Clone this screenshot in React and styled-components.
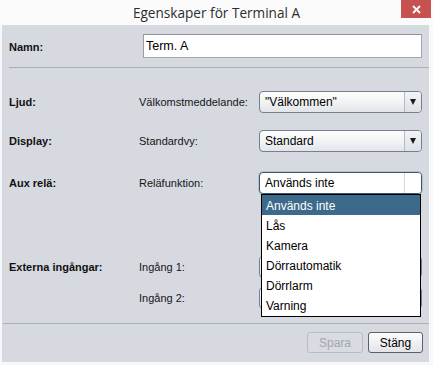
import styled, { createGlobalStyle } from 'styled-components'

const GlobalStyle = createGlobalStyle`
  html, body {
    margin: 0;
    padding: 0;
    background: #f7f8fa;
  }
  body {
    font-family: 'Liberation Sans', Arial, sans-serif;
  }
`

const Window = styled.div`
  width: 433px;
  height: 365px;
  display: flex;
  flex-direction: column;
  background: #f7f8fa;
`

const TitleBar = styled.div`
  position: relative;
  flex: none;
  height: 25px;
  display: flex;
  align-items: center;
  justify-content: center;
  background: #fbfbfc;
  font-family: 'Open Sans', 'Liberation Sans', sans-serif;
  font-size: 13.6px;
  color: #2d2d2d;
`

const Title = styled.span`
  padding-bottom: 1px;
`

const CloseButton = styled.div`
  position: absolute;
  top: 0;
  right: 2px;
  width: 30px;
  height: 18px;
  background: #c75050;
  display: flex;
  align-items: center;
  justify-content: center;
`

const Body = styled.div`
  flex: 1;
  margin: 0 4px 3px 2px;
  padding: 9px 7px 9px 7px;
  background: #d6d9e0;
  display: flex;
  flex-direction: column;
`

const NameRow = styled.div`
  display: flex;
  align-items: center;
  height: 24px;
`

const NameLabelCell = styled.div`
  width: 134px;
  flex: none;
`

const Label = styled.span`
  font-size: 11px;
  font-weight: bold;
  color: #111;
`

const SubLabel = styled.span`
  font-size: 11px;
  color: #151515;
`

const TextField = styled.div`
  flex: 1;
  height: 24px;
  box-sizing: border-box;
  border: 1px solid #a4a8af;
  border-top-color: #8f939a;
  border-left-color: #989ca3;
  background: #fff;
  display: flex;
  align-items: center;
  padding-left: 2px;
  font-size: 12.5px;
  color: #000;
`

const Separator = styled.div`
  height: 1px;
  flex: none;
  background: #a9adb4;
  margin: ${p => p.$margin};
`

const FieldRow = styled.div`
  display: grid;
  grid-template-columns: 130px 120px 1fr;
  align-items: center;
  height: 22px;
  margin-top: ${p => p.$top}px;
`

const Combo = styled.div`
  position: relative;
  height: 22px;
  box-sizing: border-box;
  border: 1px solid ${p => (p.$open ? '#405569' : '#72808f')};
  border-radius: 4px;
  background: ${p =>
    p.$open ? '#fff' : 'linear-gradient(#fdfdfd, #f1f2f4 55%, #e1e4e9)'};
  box-shadow: ${p => (p.$open ? '0 0 0 1px rgba(120, 150, 185, 0.35)' : 'none')};
  display: flex;
  align-items: stretch;
`

const ComboValue = styled.div`
  flex: 1;
  display: flex;
  align-items: center;
  padding-left: 5px;
  font-size: 12px;
  color: #000;
`

const ComboArrow = styled.div`
  width: 16px;
  border-left: 1px solid ${p => (p.$open ? '#d5d8dc' : '#b3bac4')};
  display: flex;
  align-items: center;
  justify-content: center;
  border-radius: 0 3px 3px 0;
  background: ${p => (p.$open ? '#fff' : 'linear-gradient(#f3f4f6, #dde0e5)')};
`

const Triangle = styled.div`
  width: 0;
  height: 0;
  border-left: 3.5px solid transparent;
  border-right: 3.5px solid transparent;
  border-top: 6px solid #1a1a1a;
`

const Menu = styled.ul`
  position: absolute;
  left: 1px;
  right: 0;
  top: calc(100% + 1px);
  margin: 0;
  padding: 0 0 1px;
  list-style: none;
  background: #fff;
  border: 1px solid #000;
  z-index: 10;
`

const MenuItem = styled.li`
  height: 20px;
  line-height: 22px;
  padding-left: 4px;
  font-size: 12px;
  background: ${p => (p.$active ? '#3c6a8b' : 'transparent')};
  color: ${p => (p.$active ? '#fff' : '#000')};
`

const Footer = styled.div`
  display: flex;
  justify-content: flex-end;
  gap: 5px;
  margin: 8px -1px 0 0;
`

const Button = styled.button`
  width: ${p => p.$width}px;
  height: 21px;
  box-sizing: border-box;
  padding: 0;
  font-family: 'Liberation Sans', Arial, sans-serif;
  font-size: 12px;
  border-radius: 3px;
  border: 1px solid ${p => (p.disabled ? '#b8bcc3' : '#5c6068')};
  background: ${p => (p.disabled ? '#d8dbe1' : 'linear-gradient(#fdfdfd, #e2e4e8)')};
  color: ${p => (p.disabled ? '#a3a7ae' : '#000')};
`

const RELAY_OPTIONS = ['Används inte', 'Lås', 'Kamera', 'Dörrautomatik', 'Dörrlarm', 'Varning']

function ComboBox({ value, open, options }) {
  return (
    <Combo $open={open}>
      <ComboValue>{value}</ComboValue>
      <ComboArrow $open={open}>{!open && <Triangle />}</ComboArrow>
      {open && (
        <Menu>
          {options.map(option => (
            <MenuItem key={option} $active={option === value}>
              {option}
            </MenuItem>
          ))}
        </Menu>
      )}
    </Combo>
  )
}

export default function App() {
  return (
    <>
      <GlobalStyle />
      <Window>
        <TitleBar>
          <Title>Egenskaper för Terminal A</Title>
          <CloseButton>
            <svg width="9" height="9" viewBox="0 0 9 9">
              <path d="M1 1 L8 8 M8 1 L1 8" stroke="#fff" strokeWidth="1.8" />
            </svg>
          </CloseButton>
        </TitleBar>
        <Body>
          <NameRow>
            <NameLabelCell>
              <Label>Namn:</Label>
            </NameLabelCell>
            <TextField>Term. A</TextField>
          </NameRow>
          <Separator $margin="9px -7px 0 0" />

          <FieldRow $top={23}>
            <Label>Ljud:</Label>
            <SubLabel>Välkomstmeddelande:</SubLabel>
            <ComboBox value={'"Välkommen"'} />
          </FieldRow>
          <FieldRow $top={17}>
            <Label>Display:</Label>
            <SubLabel>Standardvy:</SubLabel>
            <ComboBox value="Standard" />
          </FieldRow>
          <FieldRow $top={20}>
            <Label>Aux relä:</Label>
            <SubLabel>Reläfunktion:</SubLabel>
            <ComboBox value="Används inte" open options={RELAY_OPTIONS} />
          </FieldRow>
          <FieldRow $top={62}>
            <Label>Externa ingångar:</Label>
            <SubLabel>Ingång 1:</SubLabel>
            <ComboBox value="" />
          </FieldRow>
          <FieldRow $top={9}>
            <span />
            <SubLabel>Ingång 2:</SubLabel>
            <ComboBox value="" />
          </FieldRow>

          <Separator $margin="auto -7px 0 -6px" />
          <Footer>
            <Button $width={56} disabled>
              Spara
            </Button>
            <Button $width={55}>Stäng</Button>
          </Footer>
        </Body>
      </Window>
    </>
  )
}
